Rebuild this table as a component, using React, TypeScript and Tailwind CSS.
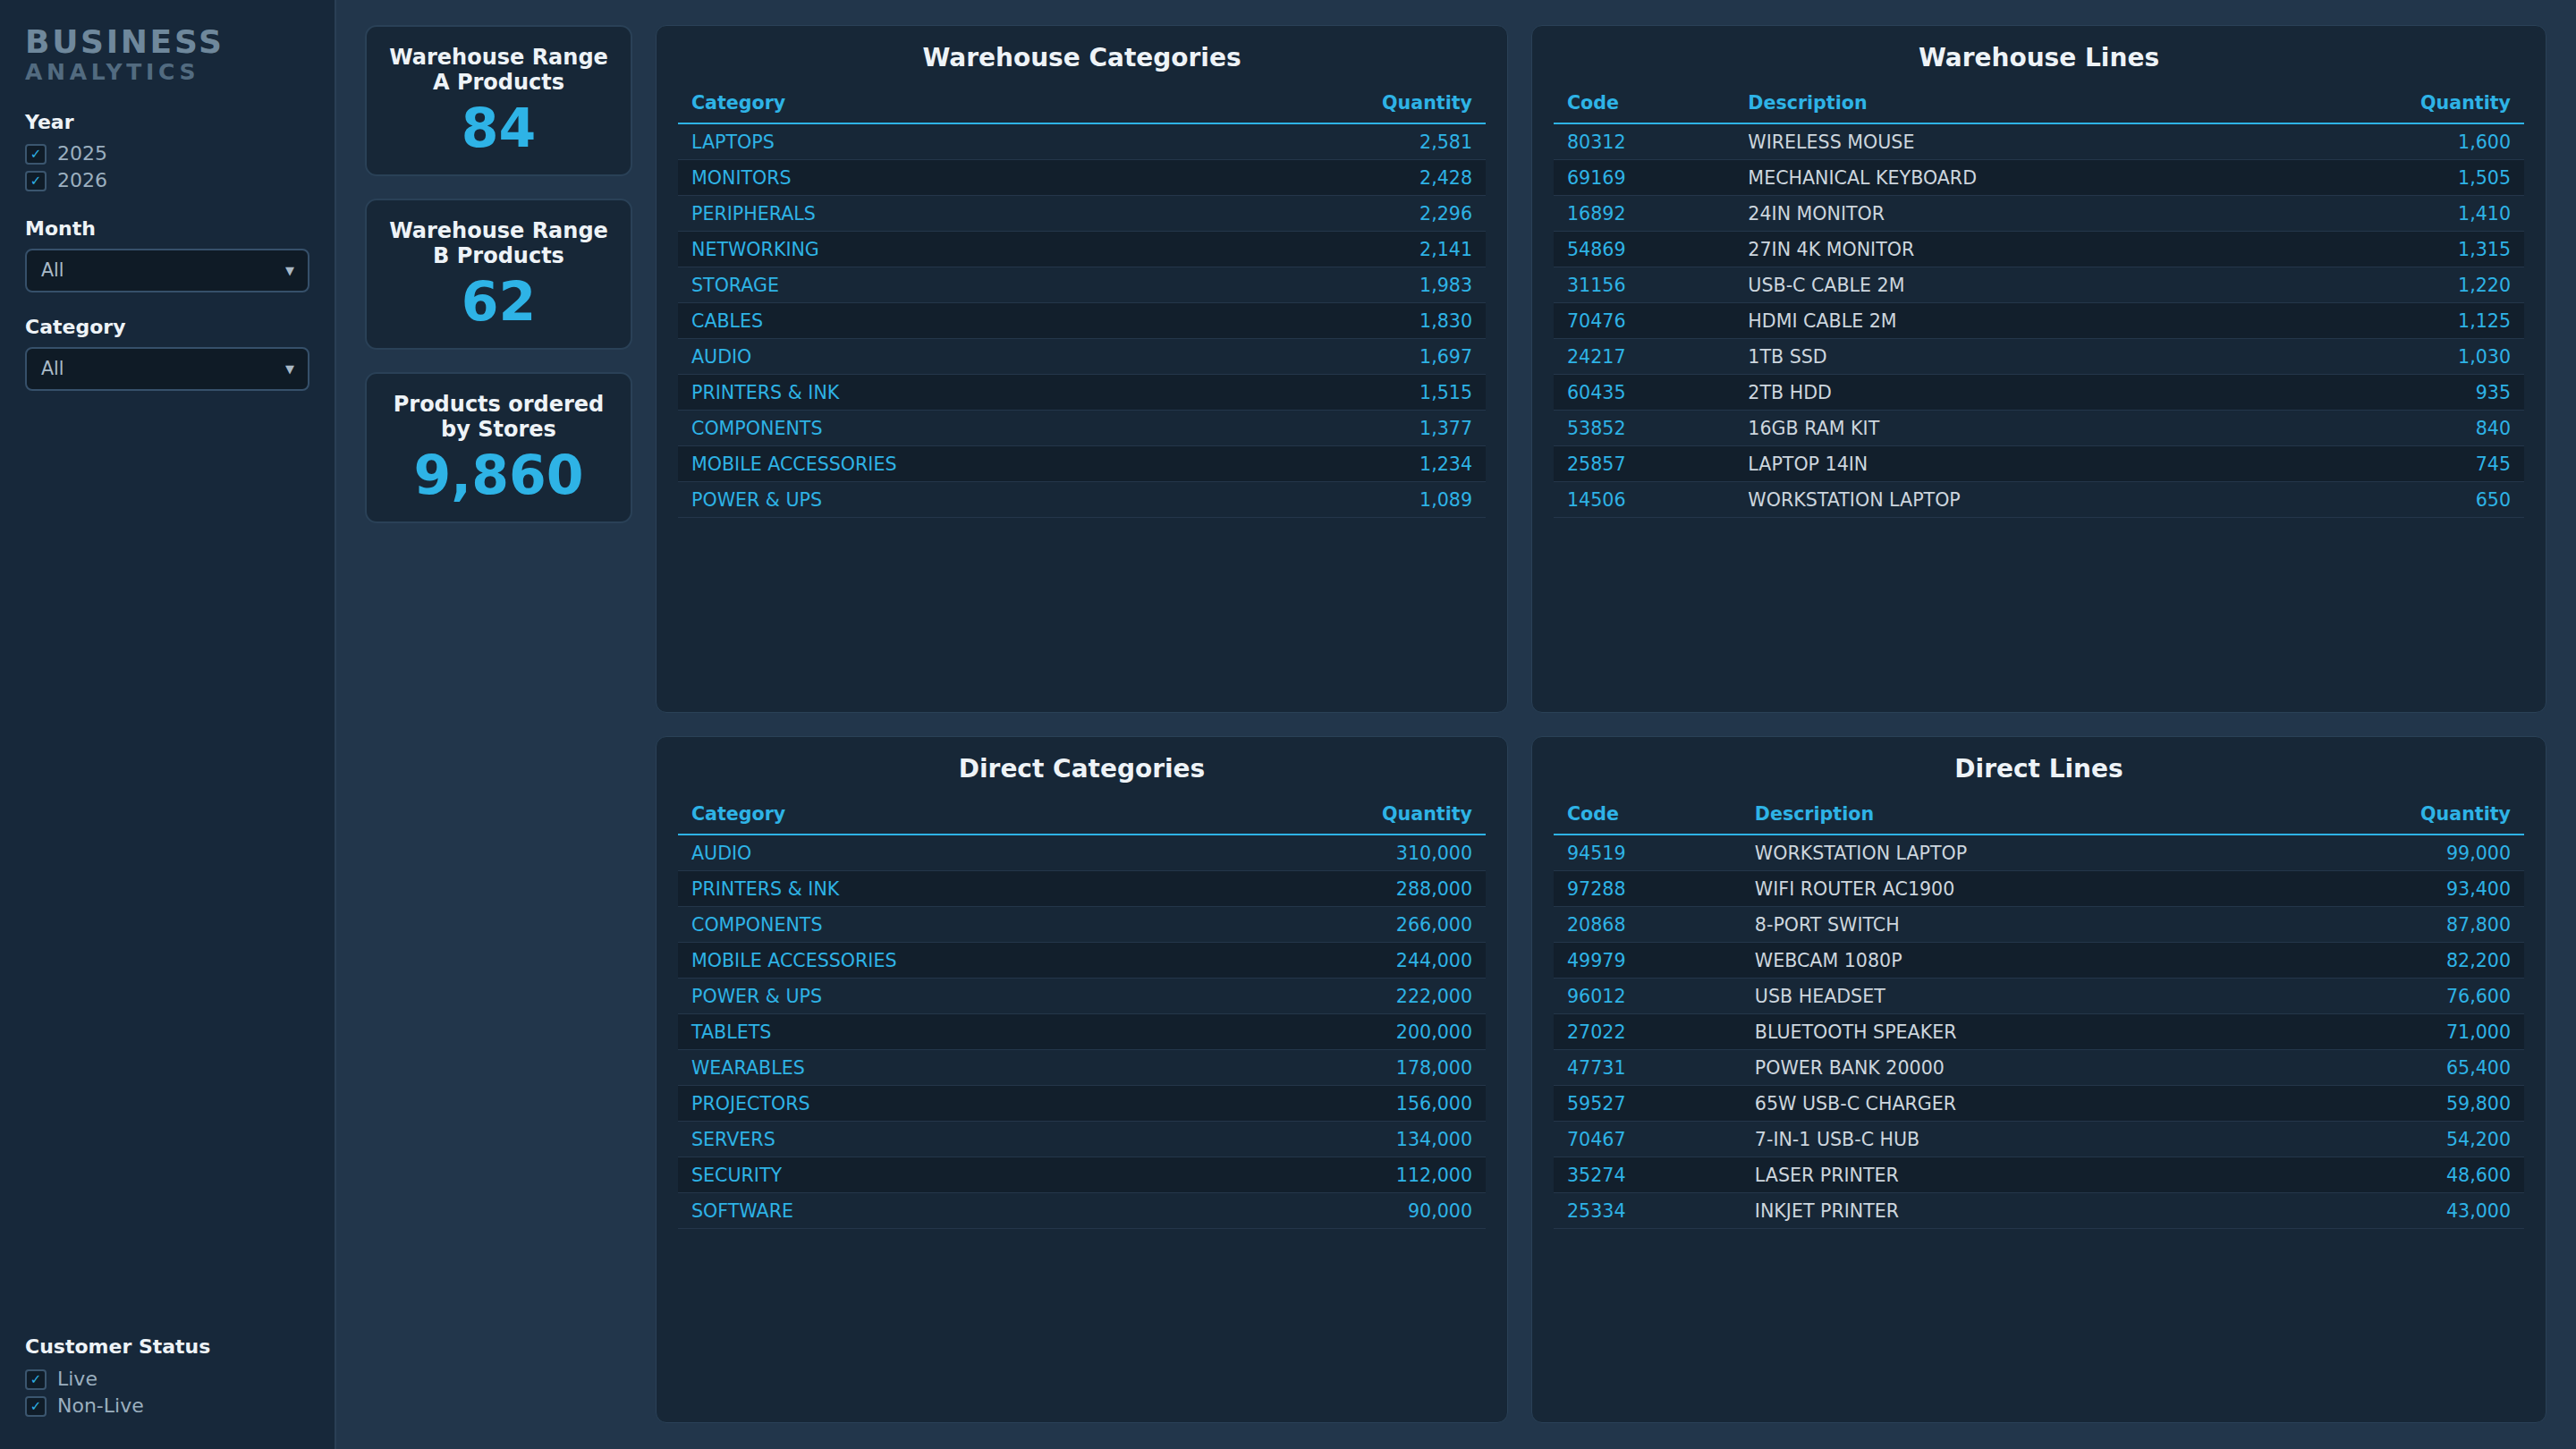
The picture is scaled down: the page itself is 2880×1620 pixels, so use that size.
import React from "react";

type CatRow = { name: string; qty: string };
type LineRow = { code: string; desc: string; qty: string };

const warehouseCategories: CatRow[] = [
  { name: "LAPTOPS", qty: "2,581" },
  { name: "MONITORS", qty: "2,428" },
  { name: "PERIPHERALS", qty: "2,296" },
  { name: "NETWORKING", qty: "2,141" },
  { name: "STORAGE", qty: "1,983" },
  { name: "CABLES", qty: "1,830" },
  { name: "AUDIO", qty: "1,697" },
  { name: "PRINTERS & INK", qty: "1,515" },
  { name: "COMPONENTS", qty: "1,377" },
  { name: "MOBILE ACCESSORIES", qty: "1,234" },
  { name: "POWER & UPS", qty: "1,089" },
];

const warehouseLines: LineRow[] = [
  { code: "80312", desc: "WIRELESS MOUSE", qty: "1,600" },
  { code: "69169", desc: "MECHANICAL KEYBOARD", qty: "1,505" },
  { code: "16892", desc: "24IN MONITOR", qty: "1,410" },
  { code: "54869", desc: "27IN 4K MONITOR", qty: "1,315" },
  { code: "31156", desc: "USB-C CABLE 2M", qty: "1,220" },
  { code: "70476", desc: "HDMI CABLE 2M", qty: "1,125" },
  { code: "24217", desc: "1TB SSD", qty: "1,030" },
  { code: "60435", desc: "2TB HDD", qty: "935" },
  { code: "53852", desc: "16GB RAM KIT", qty: "840" },
  { code: "25857", desc: "LAPTOP 14IN", qty: "745" },
  { code: "14506", desc: "WORKSTATION LAPTOP", qty: "650" },
];

const directCategories: CatRow[] = [
  { name: "AUDIO", qty: "310,000" },
  { name: "PRINTERS & INK", qty: "288,000" },
  { name: "COMPONENTS", qty: "266,000" },
  { name: "MOBILE ACCESSORIES", qty: "244,000" },
  { name: "POWER & UPS", qty: "222,000" },
  { name: "TABLETS", qty: "200,000" },
  { name: "WEARABLES", qty: "178,000" },
  { name: "PROJECTORS", qty: "156,000" },
  { name: "SERVERS", qty: "134,000" },
  { name: "SECURITY", qty: "112,000" },
  { name: "SOFTWARE", qty: "90,000" },
];

const directLines: LineRow[] = [
  { code: "94519", desc: "WORKSTATION LAPTOP", qty: "99,000" },
  { code: "97288", desc: "WIFI ROUTER AC1900", qty: "93,400" },
  { code: "20868", desc: "8-PORT SWITCH", qty: "87,800" },
  { code: "49979", desc: "WEBCAM 1080P", qty: "82,200" },
  { code: "96012", desc: "USB HEADSET", qty: "76,600" },
  { code: "27022", desc: "BLUETOOTH SPEAKER", qty: "71,000" },
  { code: "47731", desc: "POWER BANK 20000", qty: "65,400" },
  { code: "59527", desc: "65W USB-C CHARGER", qty: "59,800" },
  { code: "70467", desc: "7-IN-1 USB-C HUB", qty: "54,200" },
  { code: "35274", desc: "LASER PRINTER", qty: "48,600" },
  { code: "25334", desc: "INKJET PRINTER", qty: "43,000" },
];

const Checkbox = ({ label }: { label: string }) => (
  <div className="flex h-[30px] items-center">
    <span className="flex h-[23px] w-[24px] items-center justify-center rounded-[4px] border-2 border-[#3b566f] bg-[#0f1c28] text-[15px] leading-none text-[#2eb3e6]">
      ✓
    </span>
    <span className="ml-[12px] text-[22px] leading-[30px] text-[#9bafbf]">{label}</span>
  </div>
);

const Select = () => (
  <div className="mt-[9px] flex h-[49px] items-center justify-between rounded-[8px] border-2 border-[#36506a] bg-[#0f1b26] pl-[16px] pr-[15px]">
    <span className="text-[20.6px] text-[#a9bac8]">All</span>
    <span className="text-[13px] text-[#a9b9c7]">▼</span>
  </div>
);

const Label = ({ children }: { children: React.ReactNode }) => (
  <div className="text-[22px] font-bold leading-[26px] text-[#eef3f7]">{children}</div>
);

const KpiCard = ({ title, value }: { title: string[]; value: string }) => (
  <div className="rounded-[13px] border-2 border-[#2a4157] bg-[#172737] pb-[19px] pt-[20px] text-center">
    {title.map((t) => (
      <div key={t} className="text-[24px] font-bold leading-[28px] text-[#eef3f7]">
        {t}
      </div>
    ))}
    <div className="mt-[4px] text-[60px] font-bold leading-[66px] text-[#2eb3e6]">{value}</div>
  </div>
);

const Panel = ({ title, children }: { title: string; children: React.ReactNode }) => (
  <div className="min-h-0 overflow-hidden rounded-[12px] border border-[#2a4157] bg-[#172737] px-[24px] pt-[19px]">
    <div className="text-center text-[28px] font-bold leading-[34px] text-[#eef3f7]">{title}</div>
    <table className="mt-[11px] w-full border-collapse text-[20.6px] leading-[24px]">
      {children}
    </table>
  </div>
);

const th = "border-b-2 border-[#2eb3e6] px-[15px] pb-[10px] pt-[10px] font-bold text-[#2eb3e6]";
const td = "border-b border-[#24364a] px-[15px] pb-[7px] pt-[8px]";

const CategoryTable = ({ title, rows }: { title: string; rows: CatRow[] }) => (
  <Panel title={title}>
    <thead>
      <tr>
        <th className={`${th} text-left`}>Category</th>
        <th className={`${th} text-right`}>Quantity</th>
      </tr>
    </thead>
    <tbody>
      {rows.map((r, i) => (
        <tr key={r.name} className={i % 2 === 1 ? "bg-[#121f2c]" : ""}>
          <td className={`${td} text-left text-[#2eb3e6]`}>{r.name}</td>
          <td className={`${td} text-right text-[#2eb3e6]`}>{r.qty}</td>
        </tr>
      ))}
    </tbody>
  </Panel>
);

const LinesTable = ({ title, rows }: { title: string; rows: LineRow[] }) => (
  <Panel title={title}>
    <thead>
      <tr>
        <th className={`${th} text-left`}>Code</th>
        <th className={`${th} text-left`}>Description</th>
        <th className={`${th} text-right`}>Quantity</th>
      </tr>
    </thead>
    <tbody>
      {rows.map((r, i) => (
        <tr key={r.code} className={i % 2 === 1 ? "bg-[#121f2c]" : ""}>
          <td className={`${td} text-left text-[#2eb3e6]`}>{r.code}</td>
          <td className={`${td} text-left text-[#cdd6de]`}>{r.desc}</td>
          <td className={`${td} text-right text-[#2eb3e6]`}>{r.qty}</td>
        </tr>
      ))}
    </tbody>
  </Panel>
);

export default function App() {
  return (
    <div className="flex h-screen w-full overflow-hidden bg-[#22364b] font-['DejaVu_Sans',sans-serif]">
      {/* Sidebar */}
      <aside className="flex w-[376px] shrink-0 flex-col border-r-2 border-[#2a3f55] bg-[#17283a] px-[28px] pb-[33px] pt-[29px]">
        <div className="text-[36px] font-bold leading-[36px] tracking-[2.7px] text-[#6f889c]">BUSINESS</div>
        <div className="text-[25px] font-bold leading-[32px] tracking-[4.7px] text-[#526b80]">ANALYTICS</div>

        <div className="mt-[27px]">
          <Label>Year</Label>
          <div className="mt-[7px]">
            <Checkbox label="2025" />
            <Checkbox label="2026" />
          </div>
        </div>

        <div className="mt-[26px]">
          <Label>Month</Label>
          <Select />
        </div>

        <div className="mt-[26px]">
          <Label>Category</Label>
          <Select />
        </div>

        <div className="mt-auto">
          <Label>Customer Status</Label>
          <div className="mt-[8px]">
            <Checkbox label="Live" />
            <Checkbox label="Non-Live" />
          </div>
        </div>
      </aside>

      {/* Main */}
      <main className="grid min-w-0 flex-1 grid-cols-[299px_953px_1fr] grid-rows-2 gap-[26px] pb-[29px] pl-[32px] pr-[33px] pt-[28px]">
        <div className="flex flex-col gap-[25px]">
          <KpiCard title={["Warehouse Range", "A Products"]} value="84" />
          <KpiCard title={["Warehouse Range", "B Products"]} value="62" />
          <KpiCard title={["Products ordered", "by Stores"]} value="9,860" />
        </div>
        <CategoryTable title="Warehouse Categories" rows={warehouseCategories} />
        <LinesTable title="Warehouse Lines" rows={warehouseLines} />
        <div />
        <CategoryTable title="Direct Categories" rows={directCategories} />
        <LinesTable title="Direct Lines" rows={directLines} />
      </main>
    </div>
  );
}
